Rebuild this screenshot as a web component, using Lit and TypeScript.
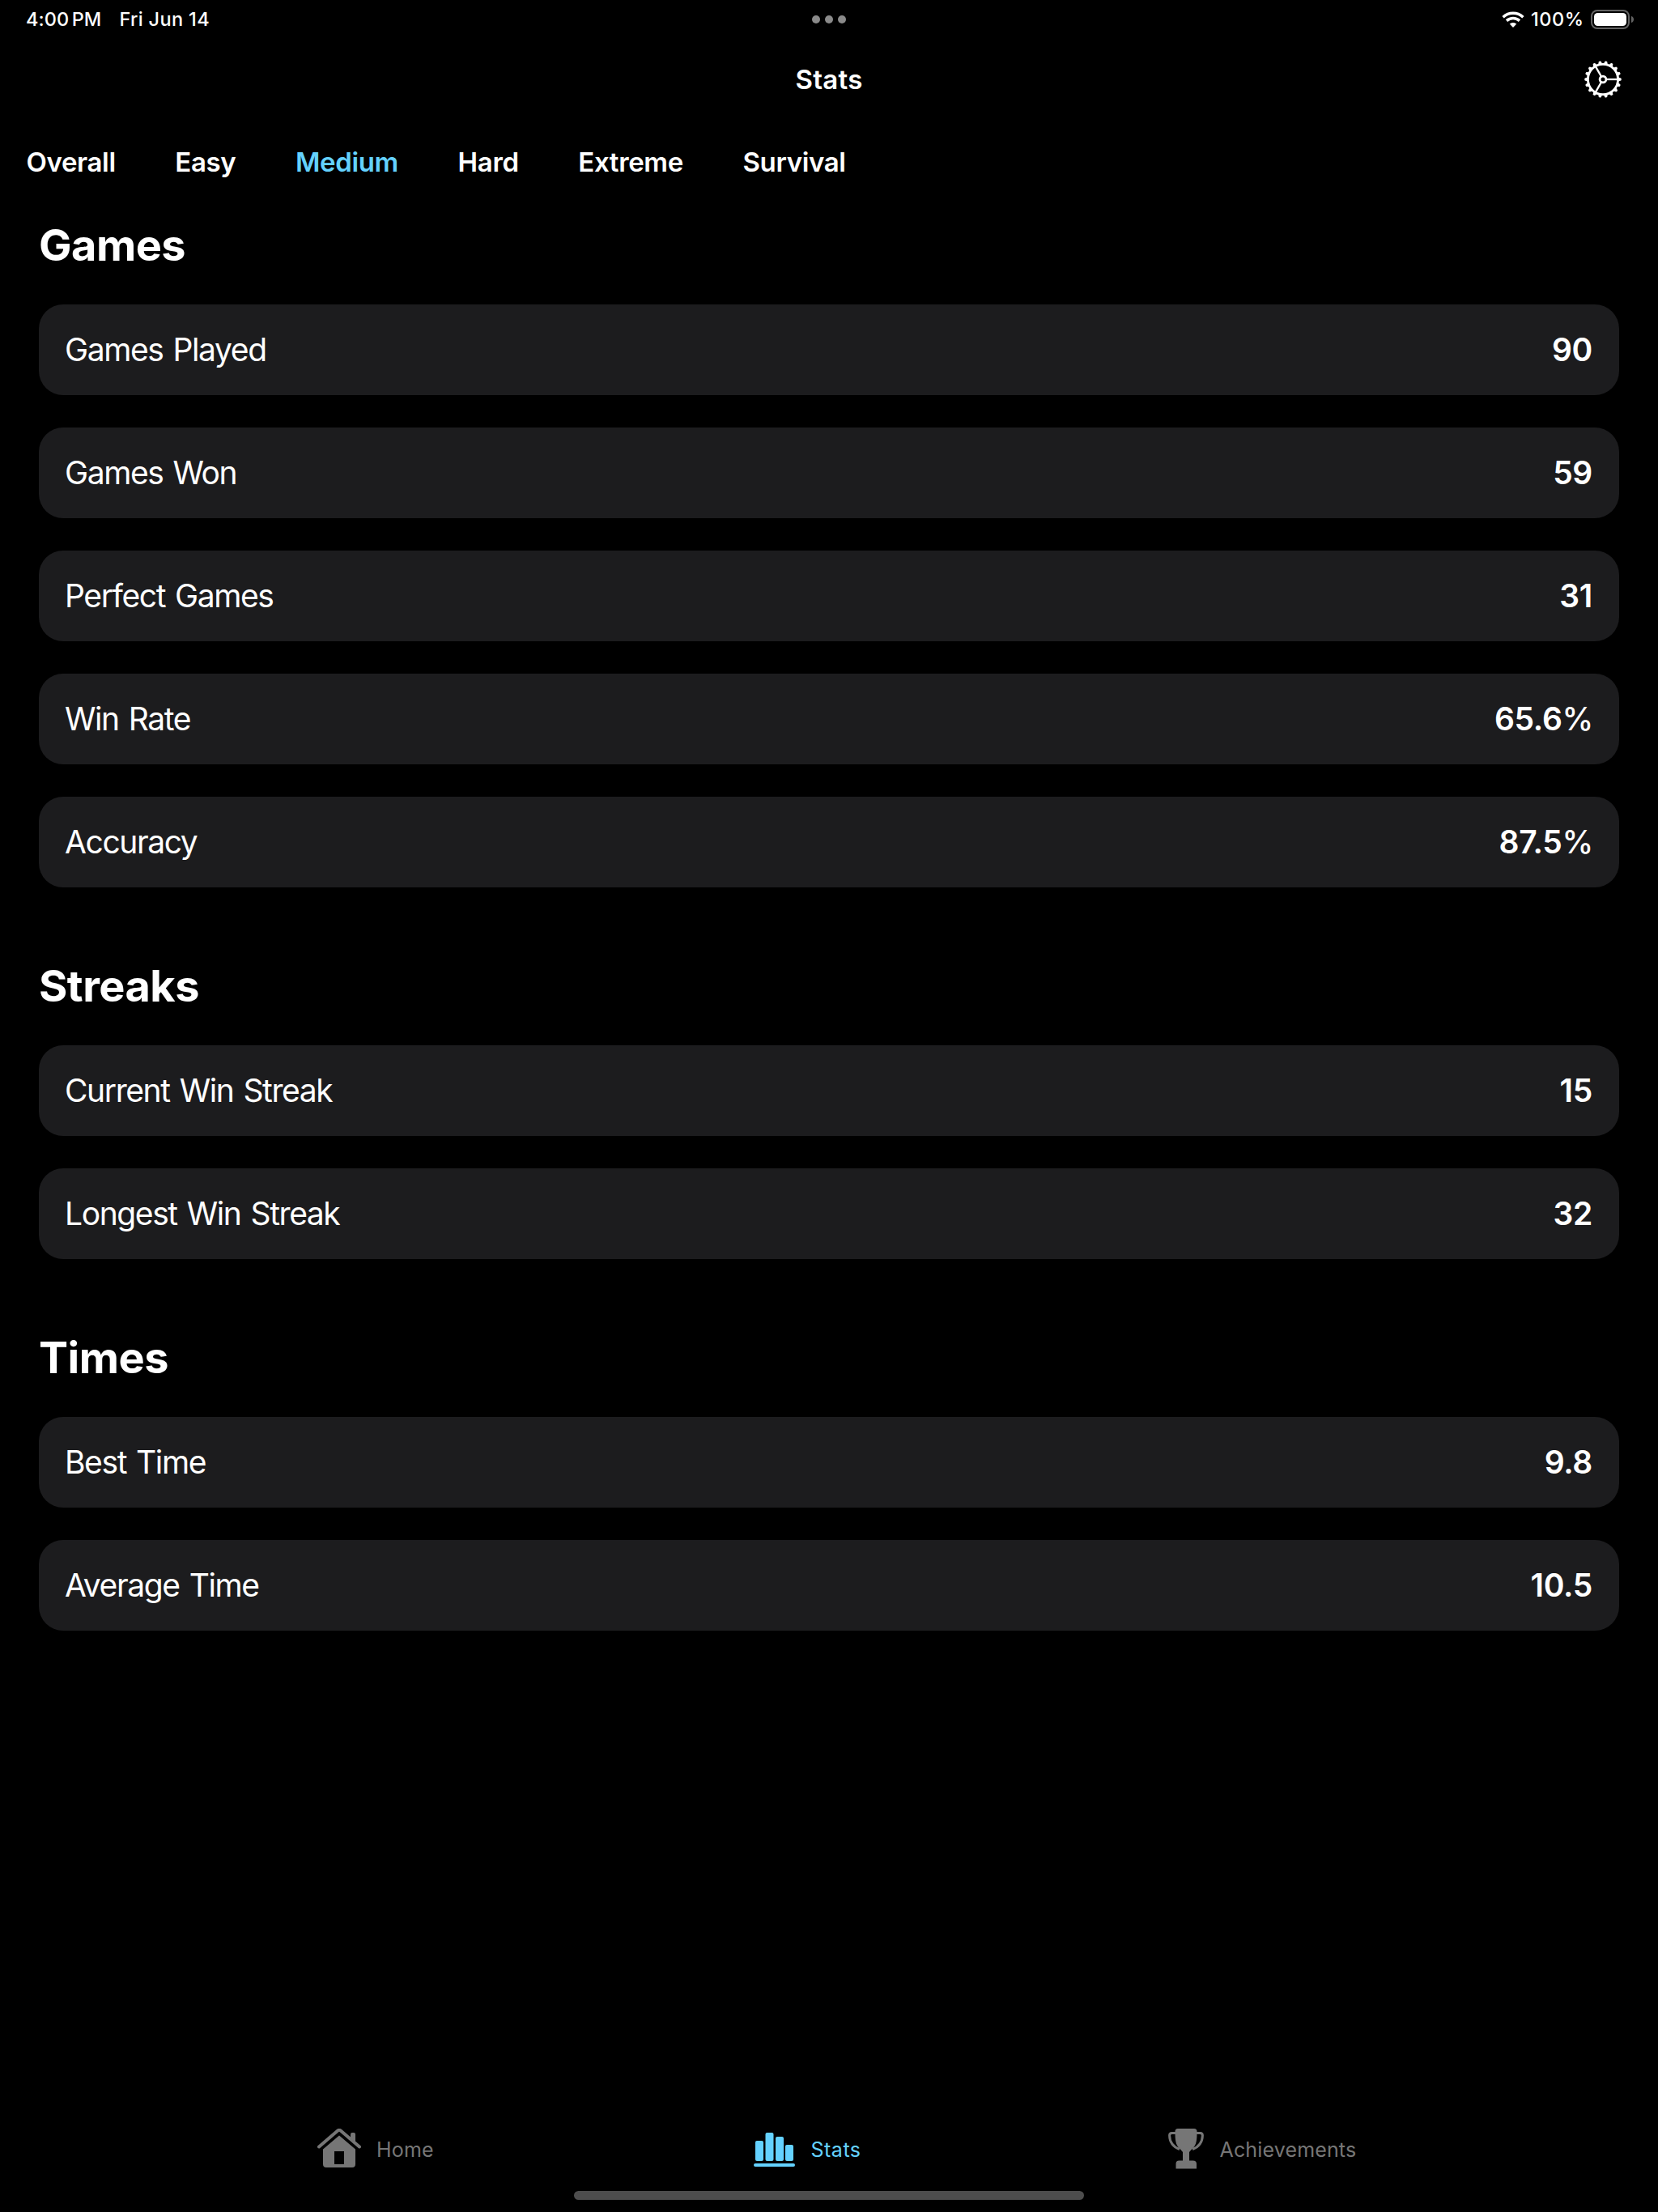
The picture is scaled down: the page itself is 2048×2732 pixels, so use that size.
import { LitElement, html, css, svg, nothing } from "lit";
import { customElement } from "lit/decorators.js";
import { classMap } from "lit/directives/class-map.js";

interface Stat { label: string; value: string; unit?: string; }
interface Section { title: string; stats: Stat[]; }

const MODES = ["Overall", "Easy", "Medium", "Hard", "Extreme", "Survival"];

const SECTIONS: Section[] = [
  {
    title: "Games",
    stats: [
      { label: "Games Played", value: "90" },
      { label: "Games Won", value: "59" },
      { label: "Perfect Games", value: "31" },
      { label: "Win Rate", value: "65.6", unit: "%" },
      { label: "Accuracy", value: "87.5", unit: "%" },
    ],
  },
  {
    title: "Streaks",
    stats: [
      { label: "Current Win Streak", value: "15" },
      { label: "Longest Win Streak", value: "32" },
    ],
  },
  {
    title: "Times",
    stats: [
      { label: "Best Time", value: "9.8" },
      { label: "Average Time", value: "10.5" },
    ],
  },
];

// Eighteen teeth, one every 20 degrees.
const TEETH = Array.from({ length: 18 }, (_, i) => i * 20);

const gear = html`<svg class="gear" width="48" height="48" viewBox="-24 -24 48 48">
  <circle r="18.600" fill="none" stroke="#fff" stroke-width="2.800" />
  <circle r="3.900" fill="none" stroke="#fff" stroke-width="2.800" />
  ${[0, 120, 240].map((a) => svg`<path transform="rotate(${a})" d="M4.500 0H18" stroke="#fff" stroke-width="2.300" />`)}
  ${TEETH.map((a) => svg`<path transform="rotate(${a})" d="M19 -2.500L22.300 -1.400Q23.400 0 22.300 1.400L19 2.500Z" fill="#fff" />`)}
</svg>`;

const wifi = html`<svg width="28" height="20" viewBox="0 0 28 20" fill="none" stroke="#fff">
  <path d="M1.6 7.2C8.6 0.6 19.4 0.6 26.4 7.2" stroke-width="3.5" />
  <path d="M6 11.6C10.6 7.4 17.4 7.4 22 11.6" stroke-width="3.5" />
  <path d="M14 20L9.7 15.6C12.2 13.3 15.8 13.3 18.3 15.6Z" fill="#fff" stroke="none" />
</svg>`;

const battery = html`<svg width="54" height="24" viewBox="0 0 54 24">
  <rect x="1" y="1" width="46" height="22" rx="7" fill="none" stroke="#636363" stroke-width="2" />
  <rect x="4" y="4" width="40" height="16" rx="4.5" fill="#fff" />
  <path d="M50 8C54 9 54 15 50 16Z" fill="#636363" />
</svg>`;

const home = html`<svg width="54" height="49" viewBox="0 0 54 49">
  <path d="M2 22.500L25.500 2.300Q27 1.300 28.500 2.300L52 22.500" fill="none" stroke="currentColor" stroke-width="4" stroke-linecap="round" stroke-linejoin="round" />
  <path d="M41 12V7Q41 5 43 5H45Q47 5 47 7V17Z" fill="currentColor" />
  <path fill-rule="evenodd" d="M27 8.600L47 25.500V44Q47 48 43 48H11Q7 48 7 44V25.500ZM21 28V44H33V28Z" fill="currentColor" />
</svg>`;

const bars = html`<svg width="52" height="44" viewBox="0 0 52 44" fill="currentColor">
  <rect x="2" y="10" width="10" height="25" rx="2" />
  <rect x="14.5" y="0" width="10" height="35" rx="2" />
  <rect x="27" y="5" width="10" height="30" rx="2" />
  <rect x="39" y="15" width="10" height="20" rx="2" />
  <rect x="0" y="38" width="51" height="4" rx="2" />
</svg>`;

const trophy = html`<svg width="44" height="50" viewBox="0 0 44 50" fill="currentColor">
  <path d="M12 0H32Q35.500 0 35.500 3.500C35.500 14 35 20 30 24.500L26 29V39.500H30.500Q35 39.500 35 43.500V49.500H9.500V43.500Q9.500 39.500 13.500 39.500H18V29L14 24.500C9 20 8.500 14 8.500 3.500Q8.500 0 12 0Z" />
  <path d="M9 5.400H4.500Q1.600 5.400 1.600 8.500C1.800 17 6 22.500 14 25.500M35 5.400H39.500Q42.400 5.400 42.400 8.500C42.200 17 38 22.500 30 25.500" fill="none" stroke="currentColor" stroke-width="3" />
</svg>`;

@customElement("app-root")
export class AppRoot extends LitElement {
  static styles = css`
    :host {
      display: flex;
      flex-direction: column;
      box-sizing: border-box;
      width: 2048px;
      height: 2732px;
      background: #000;
      color: #fff;
      font-family: Inter, "Liberation Sans", sans-serif;
      overflow: hidden;
    }
    svg { display: block; flex: none; }
    .status {
      display: grid;
      grid-template-columns: 1fr auto 1fr;
      align-items: center;
      height: 48px;
      padding: 0 29px;
      font-size: 23.5px;
      font-weight: 500;
    }
    .clock { display: flex; gap: 22px; padding: 0 0 1px 3px; white-space: nowrap; }
    .time { letter-spacing: 0.1px; word-spacing: -3px; }
    .date { letter-spacing: 0.35px; }
    .dots { display: flex; gap: 6px; }
    .dot { width: 10px; height: 10px; border-radius: 50%; background: #8a8a8a; }
    .power { display: flex; justify-content: flex-end; align-items: center; }
    .percent { margin: 0 8.5px 0 8px; padding-bottom: 1px; letter-spacing: 0.5px; }
    .titlebar {
      display: grid;
      grid-template-columns: 1fr auto 1fr;
      align-items: center;
      height: 100px;
      padding: 0 44px;
    }
    .title { grid-column: 2; font-size: 33px; font-weight: 600; letter-spacing: 0.3px; }
    .gear { justify-self: end; }
    .modes {
      display: flex;
      align-items: center;
      gap: 73.6px;
      height: 104px;
      padding-left: 32.5px;
      font-size: 33px;
      font-weight: 600;
    }
    .mode { letter-spacing: -0.35px; }
    .mode.on { color: #64d2ff; }
    .content { flex: 1; padding: 0 48px; }
    .section { margin-bottom: 71px; }
    .heading {
      display: flex;
      align-items: center;
      height: 100px;
      margin: 0 0 24px;
      font-size: 54px;
      font-weight: 700;
      letter-spacing: -0.5px;
    }
    .list { display: flex; flex-direction: column; gap: 40px; }
    .card {
      display: flex;
      align-items: center;
      justify-content: space-between;
      height: 112px;
      box-sizing: border-box;
      padding: 0 33px 1px 32px;
      border-radius: 30px;
      background: #1c1c1e;
      font-size: 39px;
    }
    .label { letter-spacing: -1.4px; word-spacing: 2.5px; }
    .value { font-weight: 600; letter-spacing: -0.3px; }
    .unit { font-weight: 500; margin-right: -1px; }
    .tabs {
      display: flex;
      align-items: center;
      box-sizing: border-box;
      height: 100px;
      padding: 0 0 2px 392px;
      font-size: 25px;
      color: #767676;
    }
    .tab { display: flex; align-items: center; }
    .tab.on { color: #64d2ff; }
    .tab.home { width: 539px; gap: 19px; letter-spacing: 0.2px; }
    .tab.stats { width: 512px; gap: 18.5px; letter-spacing: 0.5px; }
    .tab.awards { gap: 19.5px; letter-spacing: 0.15px; }
    .home svg { margin-bottom: 3px; }
    .stats svg { margin-top: 2px; }
    .awards svg { margin-bottom: 2px; }
    .footer { display: flex; justify-content: center; height: 26px; }
    .indicator { width: 630px; height: 11px; border-radius: 6px; background: #4d4d4d; }
  `;

  render() {
    return html`
      <div class="status">
        <div class="clock"><span class="time">4:00 PM</span><span class="date">Fri Jun 14</span></div>
        <div class="dots"><i class="dot"></i><i class="dot"></i><i class="dot"></i></div>
        <div class="power">${wifi}<span class="percent">100%</span>${battery}</div>
      </div>
      <header class="titlebar"><span class="title">Stats</span>${gear}</header>
      <nav class="modes">
        ${MODES.map((m) => html`<span class=${classMap({ mode: true, on: m === "Medium" })}>${m}</span>`)}
      </nav>
      <main class="content">
        ${SECTIONS.map((s) => html`
          <section class="section">
            <h2 class="heading"><span>${s.title}</span></h2>
            <div class="list">
              ${s.stats.map((r) => html`<div class="card"><span class="label">${r.label}</span><span class="value">${r.value}${r.unit ? html`<span class="unit">${r.unit}</span>` : nothing}</span></div>`)}
            </div>
          </section>`)}
      </main>
      <nav class="tabs">
        <div class="tab home">${home}<span>Home</span></div>
        <div class="tab on stats">${bars}<span>Stats</span></div>
        <div class="tab awards">${trophy}<span>Achievements</span></div>
      </nav>
      <div class="footer"><div class="indicator"></div></div>
    `;
  }
}
